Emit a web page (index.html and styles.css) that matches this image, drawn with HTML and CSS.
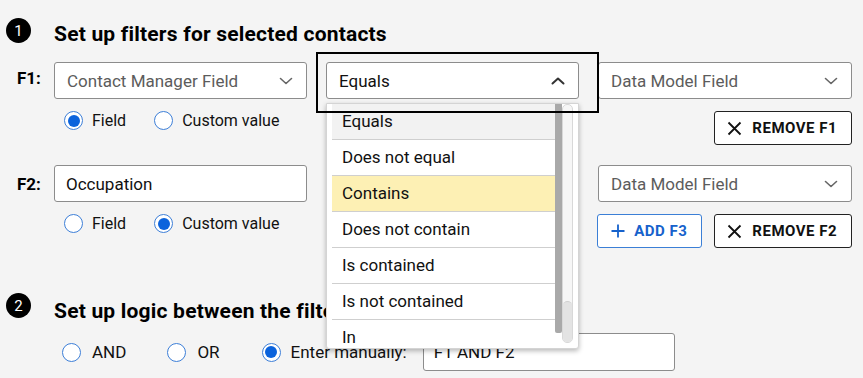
FILE: index.html
```html
<!DOCTYPE html>
<html>
<head>
<meta charset="utf-8">
<link rel="stylesheet" href="styles.css">
</head>
<body>
<div class="page">
  <div class="step">
    <span class="badge">1</span>
    <h2 class="step-title">Set up filters for selected contacts</h2>
  </div>

  <div class="filter first">
    <div class="filter-row">
      <span class="flabel raised">F1:</span>
      <div class="grid">
        <div class="select placeholder"><span>Contact Manager Field</span><svg class="chev" width="14" height="8" viewBox="0 0 14 8"><polyline points="1.5,1.5 7,6.5 12.5,1.5"/></svg></div>
        <div class="op-wrap">
          <div class="select"><span>Equals</span><svg class="chev up" width="14" height="8" viewBox="0 0 14 8"><polyline points="1.5,6.5 7,1.5 12.5,6.5"/></svg></div>
          <div class="dropdown">
            <ul class="options">
              <li class="opt current">Equals</li>
              <li class="opt">Does not equal</li>
              <li class="opt hl">Contains</li>
              <li class="opt">Does not contain</li>
              <li class="opt">Is contained</li>
              <li class="opt">Is not contained</li>
              <li class="opt">In</li>
            </ul>
            <div class="sb-bar"></div>
            <div class="sb-track"><div class="sb-thumb"></div></div>
          </div>
          <div class="highlight"></div>
        </div>
        <div class="select placeholder"><span>Data Model Field</span><svg class="chev" width="14" height="8" viewBox="0 0 14 8"><polyline points="1.5,1.5 7,6.5 12.5,1.5"/></svg></div>
      </div>
    </div>
    <div class="sub-row grid">
      <div class="radios">
        <label class="ropt"><span class="radio checked"></span>Field</label>
        <label class="ropt"><span class="radio"></span>Custom value</label>
      </div>
      <div class="actions">
        <button class="btn"><svg width="15" height="15" viewBox="0 0 15 15"><path d="M1.5 1.5 L13.5 13.5 M13.5 1.5 L1.5 13.5"/></svg>REMOVE F1</button>
      </div>
    </div>
  </div>

  <div class="filter second">
    <div class="filter-row">
      <span class="flabel">F2:</span>
      <div class="grid">
        <div class="select input"><span>Occupation</span></div>
        <div class="select"><span>Equals</span></div>
        <div class="select placeholder"><span>Data Model Field</span><svg class="chev" width="14" height="8" viewBox="0 0 14 8"><polyline points="1.5,1.5 7,6.5 12.5,1.5"/></svg></div>
      </div>
    </div>
    <div class="sub-row grid">
      <div class="radios">
        <label class="ropt"><span class="radio"></span>Field</label>
        <label class="ropt"><span class="radio checked"></span>Custom value</label>
      </div>
      <div class="actions">
        <button class="btn blue"><svg width="14" height="14" viewBox="0 0 14 14"><path d="M7 0.5 V13.5 M0.5 7 H13.5"/></svg>ADD F3</button>
        <button class="btn"><svg width="15" height="15" viewBox="0 0 15 15"><path d="M1.5 1.5 L13.5 13.5 M13.5 1.5 L1.5 13.5"/></svg>REMOVE F2</button>
      </div>
    </div>
  </div>

  <div class="step second-step">
    <span class="badge">2</span>
    <h2 class="step-title">Set up logic between the filters</h2>
  </div>

  <div class="logic-row">
    <label class="ropt and"><span class="radio"></span>AND</label>
    <label class="ropt or"><span class="radio"></span>OR</label>
    <label class="ropt manual"><span class="radio checked"></span>Enter manually:</label>
    <div class="text-input">F1 AND F2</div>
  </div>
</div>
</body>
</html>
```

FILE: styles.css
```css
* { box-sizing: border-box; }

body {
  margin: 0;
  background: #f4f4f4;
  font-family: Roboto, "Liberation Sans", sans-serif;
  color: #111;
}

.page {
  padding-top: 18px;
}

.step {
  display: flex;
  align-items: flex-start;
  padding-left: 6px;
}

.badge {
  width: 25px;
  height: 25px;
  border-radius: 50%;
  background: #000;
  color: #fff;
  font-size: 15px;
  display: flex;
  align-items: center;
  justify-content: center;
  flex: none;
}

.step-title {
  margin: 4px 0 0 23px;
  font-size: 21px;
  line-height: 24px;
  letter-spacing: 0.2px;
  font-weight: 700;
  color: #000;
}

.filter.first { margin-top: 16px; }
.filter.second { margin-top: 20px; }

.filter-row {
  display: flex;
  align-items: center;
  padding-left: 17px;
}

.flabel {
  width: 37px;
  font-size: 17px;
  font-weight: 700;
  color: #000;
}

.flabel.raised { margin-top: -5px; }

.grid {
  display: grid;
  grid-template-columns: 253px 253px 254px;
  column-gap: 19px;
}

.select {
  height: 37px;
  background: #fff;
  border: 1px solid #8c8c8c;
  border-radius: 3px;
  display: flex;
  align-items: center;
  justify-content: space-between;
  padding: 0 13px 0 12px;
  font-size: 17px;
  color: #111;
}

.select.placeholder { color: #5c5c5c; }
.select.input { padding-left: 11px; }

.chev {
  fill: none;
  stroke: #666;
  stroke-width: 1.6;
  stroke-linecap: round;
  stroke-linejoin: round;
}

.chev.up {
  stroke: #333;
  stroke-width: 2;
}

.op-wrap { position: relative; }

.highlight {
  position: absolute;
  left: -10px;
  top: -10px;
  width: 283px;
  height: 61px;
  border: 2px solid #000;
  z-index: 3;
  pointer-events: none;
}

.dropdown {
  position: absolute;
  left: 0;
  top: 41px;
  width: 253px;
  height: 246px;
  background: #fff;
  border: 1px solid #d4d4d4;
  border-radius: 0 0 3px 3px;
  box-shadow: 0 2px 5px rgba(0, 0, 0, 0.28);
  z-index: 2;
  display: flex;
  padding-left: 5px;
  overflow: hidden;
}

.options {
  list-style: none;
  margin: 0;
  padding: 0;
  width: 223px;
  flex: none;
}

.opt {
  height: 36px;
  line-height: 35px;
  border-bottom: 1px solid #cfcfcf;
  padding-left: 10px;
  font-size: 17px;
  color: #111;
  background: #fff;
}

.opt.current { background: #f2f2f2; }
.opt.hl { background: #fdf0b4; }

.sb-bar {
  width: 7px;
  height: 229px;
  background: #a9a9a9;
  border-radius: 0 0 2px 2px;
  flex: none;
}

.sb-track {
  width: 11px;
  height: 239px;
  border: 1px solid #d8d8d8;
  border-radius: 5px;
  background: #f6f6f6;
  flex: none;
  display: flex;
  flex-direction: column;
  justify-content: flex-end;
  overflow: hidden;
}

.sb-thumb {
  height: 41px;
  background: #e3e3e3;
  border-top: 1px solid #d0d0d0;
  border-radius: 5px 5px 0 0;
}

.sub-row {
  margin-top: 12px;
  padding-left: 54px;
  align-items: start;
}

.radios {
  display: flex;
  gap: 28px;
  padding-left: 10px;
}

.ropt {
  display: flex;
  align-items: center;
  gap: 9px;
  font-size: 16px;
  line-height: 19px;
  color: #111;
}

.radio {
  width: 19px;
  height: 19px;
  border-radius: 50%;
  border: 1.5px solid #3d7fd8;
  background: #fff;
  display: flex;
  align-items: center;
  justify-content: center;
  flex: none;
}

.radio.checked::after {
  content: "";
  width: 12px;
  height: 12px;
  border-radius: 50%;
  background: #0b63dc;
}

.actions {
  grid-column: 2 / 4;
  display: flex;
  justify-content: flex-end;
  gap: 12px;
}

.btn {
  height: 34px;
  display: flex;
  align-items: center;
  gap: 10px;
  padding: 0 14px 0 12px;
  background: #fff;
  border: 1px solid #222;
  border-radius: 3px;
  font-family: Roboto, "Liberation Sans", sans-serif;
  font-size: 15px;
  letter-spacing: 0.5px;
  font-weight: 700;
  color: #111;
  white-space: nowrap;
}

.btn svg {
  fill: none;
  stroke: #111;
  stroke-width: 1.8;
  flex: none;
}

.btn.blue {
  border-color: #3b7fd6;
  color: #1662cc;
  gap: 9px;
  padding-left: 13px;
}

.btn.blue svg { stroke: #1662cc; }

.second-step { margin-top: 45px; }
.second-step .step-title { margin-top: 6px; }

.logic-row {
  display: flex;
  align-items: center;
  margin-top: 10px;
  padding-left: 62px;
}

.logic-row .ropt { gap: 11px; font-size: 17px; }
.logic-row .and { margin-right: 41px; }
.logic-row .or { margin-right: 42px; }
.logic-row .manual { gap: 10px; }

.text-input {
  width: 252px;
  height: 38px;
  margin-left: 16px;
  background: #fff;
  border: 1px solid #8c8c8c;
  border-radius: 3px;
  display: flex;
  align-items: center;
  padding-left: 10px;
  font-size: 17px;
  color: #111;
}
```
